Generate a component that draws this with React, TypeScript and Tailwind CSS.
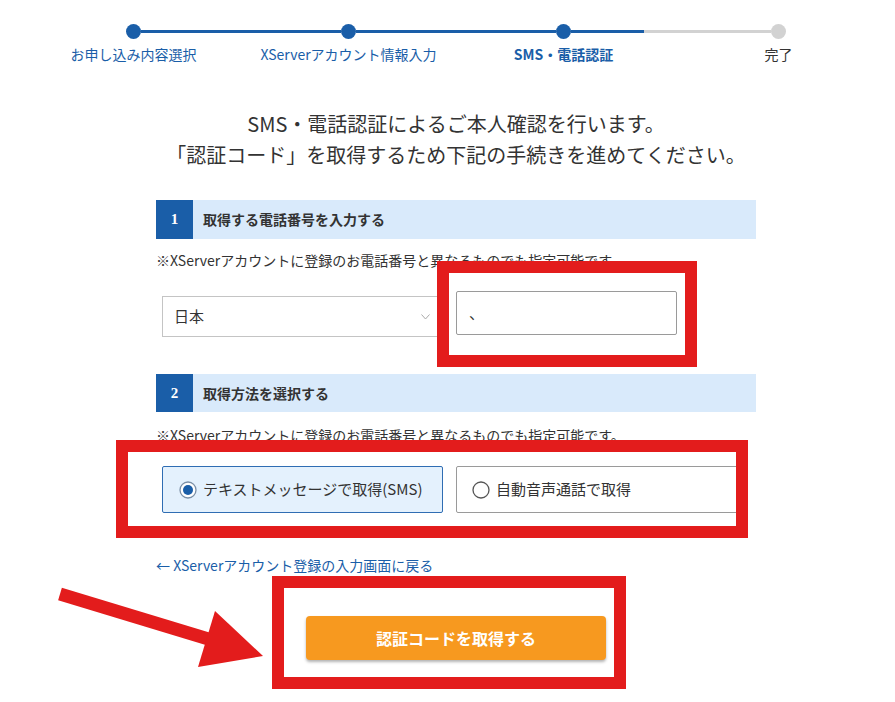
import React from 'react'

const font = { fontFamily: '"Noto Sans CJK JP", "Noto Sans", sans-serif' }

const steps = [
  { label: 'お申し込み内容選択', cls: 'text-[#1a5ea8]' },
  { label: 'XServerアカウント情報入力', cls: 'text-[#1a5ea8]' },
  { label: 'SMS・電話認証', cls: 'text-[#1a5ea8] font-bold' },
  { label: '完了', cls: 'text-[#333]' },
]

function Dot({ done }: { done: boolean }) {
  return <div className={`w-[15px] h-[15px] rounded-full shrink-0 ${done ? 'bg-[#1a5ea8]' : 'bg-[#d2d2d2]'}`} />
}

function SectionHead({ num, title }: { num: string; title: string }) {
  return (
    <div className="h-full flex items-stretch bg-[#d9eafb]">
      <div
        className="w-[37px] bg-[#1a5ea8] text-white font-bold text-[15px] flex items-center justify-center"
        style={{ fontFamily: '"Liberation Serif", serif' }}
      >
        {num}
      </div>
      <div className="pl-[10px] flex items-center text-[14px] font-bold text-[#333]">{title}</div>
    </div>
  )
}

function Radio({ checked }: { checked: boolean }) {
  return (
    <svg width="18" height="18" viewBox="0 0 18 18" className="shrink-0">
      <circle cx="9" cy="9" r="8" fill="#fff" stroke={checked ? '#7a8fa6' : '#555'} strokeWidth="1.3" />
      {checked && <circle cx="9" cy="9" r="5" fill="#1a5ea8" />}
    </svg>
  )
}

export default function App() {
  return (
    <div className="relative w-[895px] h-[702px] bg-white overflow-hidden text-[#333]" style={font}>
      {/* stepper */}
      <div className="pt-[24px]">
        <div className="ml-[126px] flex items-center">
          <Dot done />
          <div className="w-[200px] h-[3px] bg-[#1a5ea8]" />
          <Dot done />
          <div className="w-[200px] h-[3px] bg-[#1a5ea8]" />
          <Dot done />
          <div className="w-[73px] h-[3px] bg-[#1a5ea8]" />
          <div className="w-[127px] h-[3px] bg-[#d2d2d2]" />
          <Dot done={false} />
        </div>
        <div className="ml-[26px] mt-[5px] grid grid-cols-[215px_215px_215px_215px]">
          {steps.map((s) => (
            <div key={s.label} className={`text-center text-[14px] leading-[20px] ${s.cls}`}>
              {s.label}
            </div>
          ))}
        </div>
      </div>

      <div className="w-[600px] ml-[156px]">
        <div className="mt-[44px] text-center text-[20px] leading-[31px] text-[#333]">
          <p>SMS・電話認証によるご本人確認を行います。</p>
          <p>「認証コード」を取得するため下記の手続きを進めてください。</p>
        </div>

        <div className="mt-[30px] h-[39px]">
          <SectionHead num="1" title="取得する電話番号を入力する" />
        </div>
        <div className="mt-[11px] text-[14px] leading-[20px]">
          ※XServerアカウントに登録のお電話番号と異なるものでも指定可能です。
        </div>
        <div className="mt-[21px] flex items-start">
          <div className="ml-[6px] mt-[5px] w-[278px] h-[41px] border border-[#c4c4c4] flex items-center justify-between pl-[11px] pr-[9px] bg-white">
            <span className="text-[15px]">日本</span>
            <svg width="9" height="6" viewBox="0 0 9 6">
              <path d="M0.5 0.5 L4.5 5 L8.5 0.5" fill="none" stroke="#aaa" strokeWidth="1" />
            </svg>
          </div>
          <div className="ml-[16px] w-[221px] h-[44px] border border-[#9a9a9a] rounded-[2px] flex items-center pl-[12px] text-[15px]">
            、
          </div>
        </div>

        <div className="mt-[37px] h-[38px]">
          <SectionHead num="2" title="取得方法を選択する" />
        </div>
        <div className="mt-[13px] text-[14px] leading-[20px]">
          ※XServerアカウントに登録のお電話番号と異なるものでも指定可能です。
        </div>
        <div className="mt-[21px] flex">
          <div className="ml-[6px] w-[281px] h-[47px] border border-[#2f6db3] bg-[#e4f1fd] rounded-[2px] flex items-center gap-[6px] pl-[16px] text-[15px]">
            <Radio checked />
            <span>テキストメッセージで取得(SMS)</span>
          </div>
          <div className="ml-[13px] w-[289px] h-[47px] border border-[#9a9a9a] bg-white rounded-[2px] flex items-center gap-[6px] pl-[15px] text-[15px]">
            <Radio checked={false} />
            <span>自動音声通話で取得</span>
          </div>
        </div>

        <div className="mt-[42px] text-[14px] leading-[20px] text-[#1a5ea8]">← XServerアカウント登録の入力画面に戻る</div>

        <button className="mt-[41px] ml-[150px] w-[300px] h-[44px] rounded-[4px] bg-[#f7991f] text-white font-bold text-[16px] shadow-[0_2px_3px_rgba(0,0,0,0.3)]">
          認証コードを取得する
        </button>
      </div>

      {/* annotation overlays */}
      <div className="absolute left-[437px] top-[261px] w-[260px] h-[106px] border-[12px] border-[#e31c1c]" />
      <div className="absolute left-[116px] top-[440px] w-[632px] h-[98px] border-[12px] border-[#e31c1c]" />
      <div className="absolute left-[272px] top-[576px] w-[354px] h-[113px] border-[12px] border-[#e31c1c]" />
      <svg className="absolute left-0 top-0" width="895" height="702" viewBox="0 0 895 702">
        <line x1="60" y1="594" x2="215" y2="641" stroke="#e31c1c" strokeWidth="13" />
        <polygon points="215,611 263,656 198,667" fill="#e31c1c" />
      </svg>
    </div>
  )
}
